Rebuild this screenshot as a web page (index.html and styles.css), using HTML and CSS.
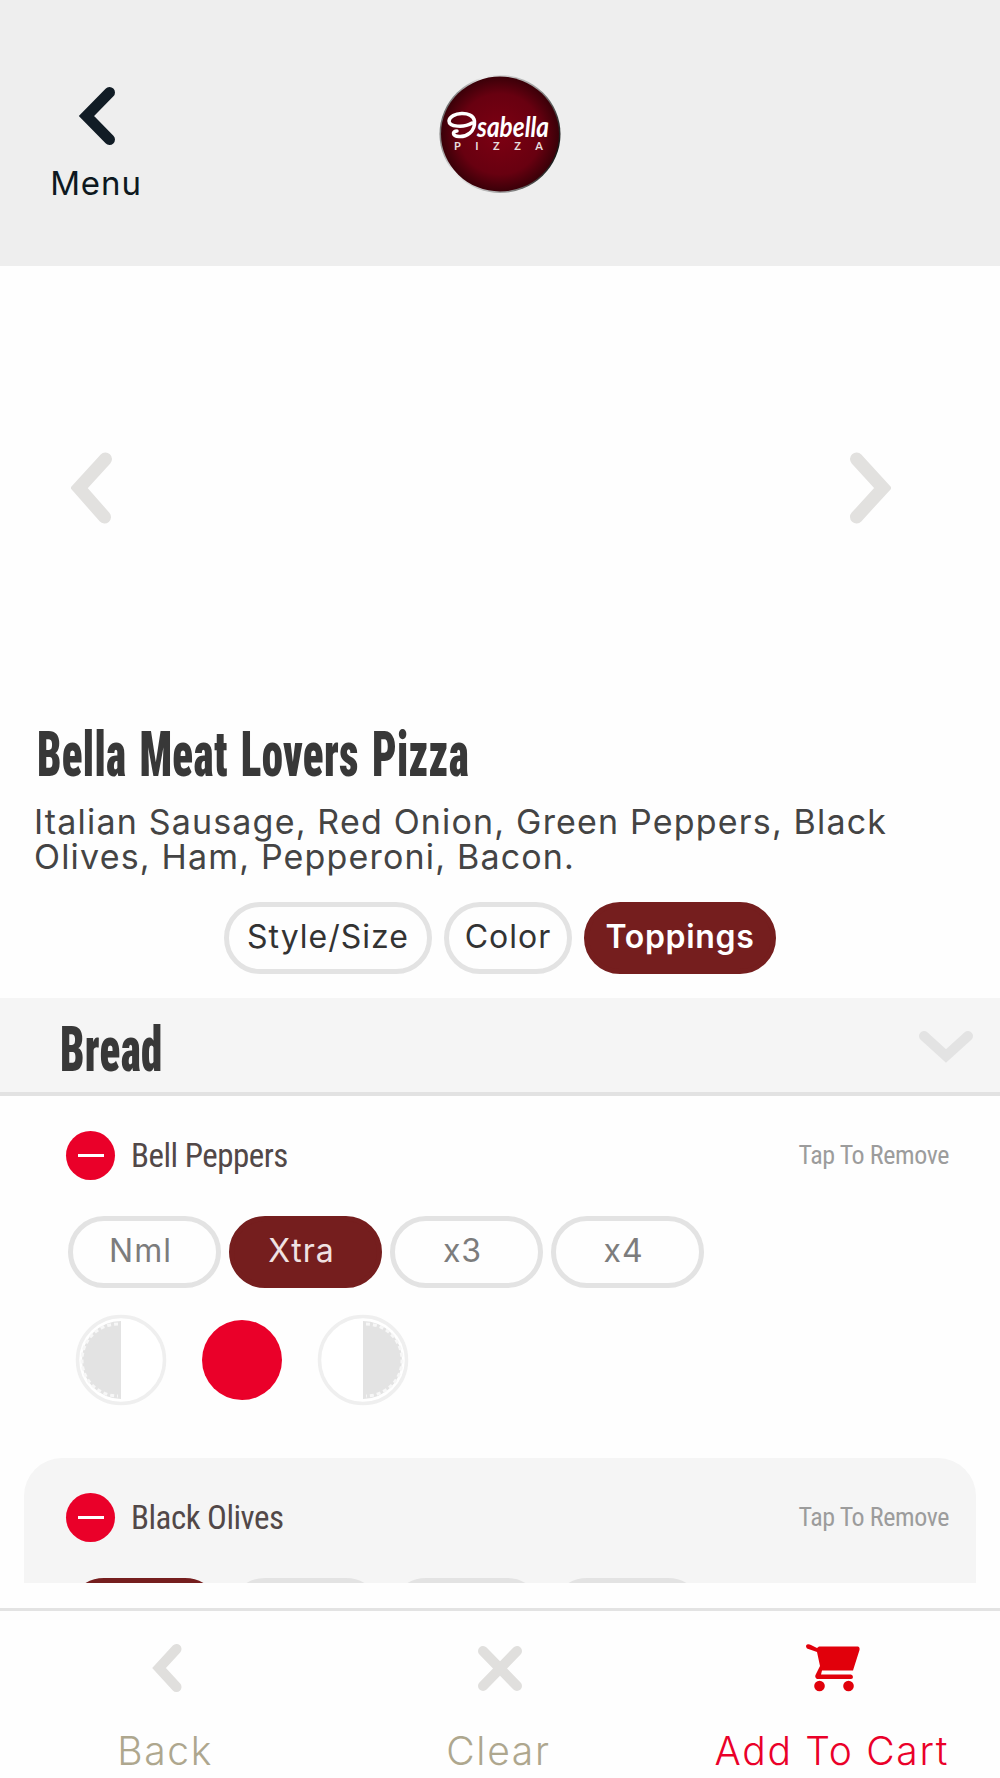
FILE: index.html
```html
<!DOCTYPE html>
<html lang="en">
<head>
    <meta charset="UTF-8">
    <meta name="viewport" content="width=device-width, initial-scale=1.0">
    <title>Isabella Pizza</title>
    <link rel="stylesheet" href="styles.css">
</head>
<body>
    <header class="header">
        <a class="menu-link">
            <svg class="menu-icon" width="38" height="58" viewBox="0 0 38 58"><path d="M31.500 5.500L8.500 29L31.500 52.500" /></svg>
            <span class="menu-label">Menu</span>
        </a>
        <svg class="logo" width="124" height="122" viewBox="0 0 124 122">
            <defs>
                <radialGradient id="wine">
                    <stop offset="0" stop-color="#7d0012" />
                    <stop offset="0.7" stop-color="#680010" />
                    <stop offset="1" stop-color="#3a0008" />
                </radialGradient>
                <linearGradient id="rim" x1="0" y1="0.300" x2="1" y2="0.600">
                    <stop offset="0" stop-color="#555" />
                    <stop offset="0.25" stop-color="#eee" />
                    <stop offset="0.7" stop-color="#999" />
                    <stop offset="1" stop-color="#111" />
                </linearGradient>
            </defs>
            <ellipse cx="62" cy="61" rx="60.500" ry="59" fill="url(#rim)" />
            <ellipse cx="62" cy="61" rx="59" ry="57.500" fill="url(#wine)" />
            <path class="logo-swash" d="M34 50C26 55 11 54 11 48C12 39 35 37 36.500 48C37.500 59 28 64 21 63.500C14 63 14 58 19 58" />
            <text class="logo-name" x="39" y="64" textLength="72" lengthAdjust="spacingAndGlyphs">sabella</text>
            <text class="logo-sub" x="16" y="77" textLength="89" lengthAdjust="spacing">PIZZA</text>
        </svg>
    </header>

    <section class="gallery">
        <svg class="arrow" width="42" height="72" viewBox="0 0 42 72"><path d="M34.500 7L8 36L33.500 65" /></svg>
        <svg class="arrow" width="42" height="72" viewBox="0 0 42 72"><path d="M7.500 7L34 36L7.500 65" /></svg>
    </section>

    <section class="product">
        <h1 class="title">Bella Meat Lovers Pizza</h1>
        <p class="description">Italian Sausage, Red Onion, Green Peppers, Black<br>Olives, Ham, Pepperoni, Bacon.</p>
        <nav class="tabs">
            <button class="pill tab-style">Style/Size</button>
            <button class="pill tab-color">Color</button>
            <button class="pill tab-toppings active">Toppings</button>
        </nav>
    </section>

    <div class="group">
        <h2 class="title">Bread</h2>
        <svg class="group-icon" width="56" height="32" viewBox="0 0 56 32"><path d="M6 5L28 25L50 5" /></svg>
    </div>

    <main class="toppings">
        <div class="topping">
            <div class="topping-head">
                <span class="remove"></span>
                <span class="topping-name">Bell Peppers</span>
                <span class="hint">Tap To Remove</span>
            </div>
            <div class="amounts">
                <button class="pill">Nml</button>
                <button class="pill active">Xtra</button>
                <button class="pill">x3</button>
                <button class="pill">x4</button>
            </div>
            <div class="sides">
                <svg class="side" width="92" height="92" viewBox="0 0 92 92">
                    <circle class="side-ring" cx="46" cy="46" r="43.500" />
                    <path class="side-fill" d="M46 7A39 39 0 0 0 46 85Z" />
                    <path class="side-crust" d="M43 10A36 36 0 0 0 43 82" />
                </svg>
                <svg class="side" width="92" height="92" viewBox="0 0 92 92">
                    <circle class="side-whole" cx="46" cy="46" r="40" />
                </svg>
                <svg class="side" width="92" height="92" viewBox="0 0 92 92">
                    <circle class="side-ring" cx="46" cy="46" r="43.500" />
                    <path class="side-fill" d="M46 7A39 39 0 0 1 46 85Z" />
                    <path class="side-crust" d="M49 10A36 36 0 0 1 49 82" />
                </svg>
            </div>
        </div>
        <div class="topping shaded">
            <div class="topping-head">
                <span class="remove"></span>
                <span class="topping-name">Black Olives</span>
                <span class="hint">Tap To Remove</span>
            </div>
            <div class="amounts">
                <button class="pill active"></button>
                <button class="pill"></button>
                <button class="pill"></button>
                <button class="pill"></button>
            </div>
        </div>
    </main>

    <footer class="footer">
        <a class="action">
            <svg class="action-icon" width="56" height="48" viewBox="0 0 56 48"><path d="M37.500 5L20 24L37.500 43" /></svg>
            <span class="action-label">Back</span>
        </a>
        <a class="action">
            <svg class="action-icon" width="56" height="48" viewBox="0 0 56 48"><path d="M11 7L45 42M45 7L11 42" /></svg>
            <span class="action-label">Clear</span>
        </a>
        <a class="action cart">
            <svg class="cart-icon" width="56" height="48" viewBox="0 0 56 48">
                <path d="M2 .5Q4 0 6 1L12 4L14 2.500H53Q55 3 54.500 6L48 26.500H17L16 30.500H46Q48 31 48 33T46 35H12Q9 33 11 30L15 22L12 8L2 4.500Q0 2 2 .5Z" />
                <circle cx="14.500" cy="42" r="5.300" />
                <circle cx="43.500" cy="42" r="5.300" />
            </svg>
            <span class="action-label">Add To Cart</span>
        </a>
    </footer>
</body>
</html>
```
FILE: styles.css
```css
* { box-sizing: border-box; }
body { margin: 0; width: 1000px; height: 1778px; overflow: hidden; display: flex; flex-direction: column; background: #fefefe; font-family: Inter, "Open Sans", sans-serif; font-weight: 400; color: #444; }
h1, h2, p { margin: 0; }
button { font: inherit; color: inherit; cursor: pointer; }
svg { display: block; flex: none; }

/* header */
.header { height: 266px; flex: none; background: #eee; display: grid; grid-template-columns: 1fr 124px 1fr; }
.menu-link { width: 194px; padding-top: 87px; display: flex; flex-direction: column; align-items: center; color: #0d1820; }
.menu-icon path { fill: none; stroke: #111c25; stroke-width: 11; stroke-linecap: round; }
.menu-label { margin: 18px 2px 0 0; font-size: 33px; line-height: 40px; letter-spacing: .9px; }
.logo { margin-top: 73px; }
.logo-swash { fill: none; stroke: #fff; stroke-width: 3.5; stroke-linecap: round; }
.logo-name { fill: #fff; font-family: Lato, sans-serif; font-style: italic; font-weight: 700; font-size: 28px; }
.logo-sub { fill: #e8dcdc; font-family: Lato, sans-serif; font-weight: 700; font-size: 11px; }

/* gallery */
.gallery { height: 443px; flex: none; padding: 0 109px 0 71px; display: flex; justify-content: space-between; align-items: center; }
.arrow path { fill: none; stroke: #e2e1df; stroke-width: 13; stroke-linecap: round; }

/* product */
.product { height: 289px; flex: none; display: flow-root; }
.title { font-family: Roboto, sans-serif; font-weight: 900; font-stretch: 75%; font-size: 63px; line-height: 60px; letter-spacing: .5px; word-spacing: 4px; color: #383838; transform: scaleX(.683); transform-origin: left; white-space: nowrap; }
.product .title { padding-left: 54px; margin-top: 16px; }
.description { margin: 19px 0 0 34px; font-size: 34px; line-height: 35px; letter-spacing: 1.18px; white-space: nowrap; }
.tabs { margin-top: 28px; display: flex; justify-content: center; gap: 12px; }
.pill { height: 72px; padding: 0 0 4px; border: 5px solid #e3e3e3; border-radius: 36px; background: none; letter-spacing: 1px; }
.pill.active { background: #751e1e; border-color: #751e1e; color: #fff; }
.tabs .pill { font-size: 32px; color: #333; }
.tabs .pill.active { font-weight: 600; letter-spacing: .7px; color: #fff; }
.tab-style { width: 208px; }
.tab-color { width: 128px; }
.tab-toppings { width: 192px; }

/* topping group */
.group { height: 98px; flex: none; padding: 0 26px 0 60px; display: flex; align-items: center; justify-content: space-between; background: #f5f5f5; border-bottom: 4px solid #e2e2e2; }
.group .title { padding-top: 9px; }
.group-icon { margin-top: 4px; }
.group-icon path { fill: none; stroke: #e3e3e3; stroke-width: 10; stroke-linecap: round; }
.toppings { height: 487px; flex: none; overflow: hidden; padding: 0 24px; }
.topping { height: 362px; padding: 34px 27px 0 42px; }
.topping.shaded { background: #f5f5f5; border-radius: 38px 38px 0 0; }
.topping-head { height: 50px; display: flex; align-items: center; font-family: Roboto, sans-serif; font-stretch: 75%; font-weight: 400; }
.remove { width: 49px; height: 49px; border-radius: 50%; background: #ea0029; display: flex; align-items: center; justify-content: center; }
.remove::before { content: ""; width: 26px; height: 3px; background: #fff; }
.topping-name { margin: 1px 0 0 16px; font-size: 33px; letter-spacing: -.5px; color: #524848; }
.hint { margin-left: auto; font-size: 26px; letter-spacing: -.4px; color: #9c9c9c; }
.amounts { margin: 36px 0 0 2px; display: flex; gap: 8px; }
.amounts .pill { width: 153px; padding-right: 8px; font-size: 32px; color: #7c7c7c; }
.amounts .pill.active { color: #f0e2e2; }
.sides { margin: 26px 0 0 9px; display: flex; gap: 29px; }
.side-ring { fill: #fff; stroke: #efefef; stroke-width: 3.5; }
.side-fill { fill: #e3e3e3; }
.side-crust { fill: none; stroke: #f7f7f7; stroke-width: 3; stroke-dasharray: 4 3; }
.side-whole { fill: #ea0029; }

/* footer */
.footer { margin-top: 25px; height: 170px; flex: none; border-top: 3px solid #e3e3e3; display: grid; grid-template-columns: repeat(3, 1fr); }
.action { padding-top: 33px; display: flex; flex-direction: column; align-items: center; color: #aea78e; }
.action-icon path { fill: none; stroke: #e0dfdd; stroke-width: 10; stroke-linecap: round; }
.action-label { margin: 34px 3px 0 0; font-size: 39px; line-height: 50px; font-weight: 300; letter-spacing: 1.7px; white-space: nowrap; }
.cart { color: #ea0029; }
.cart-icon { fill: #e1000b; }
```
